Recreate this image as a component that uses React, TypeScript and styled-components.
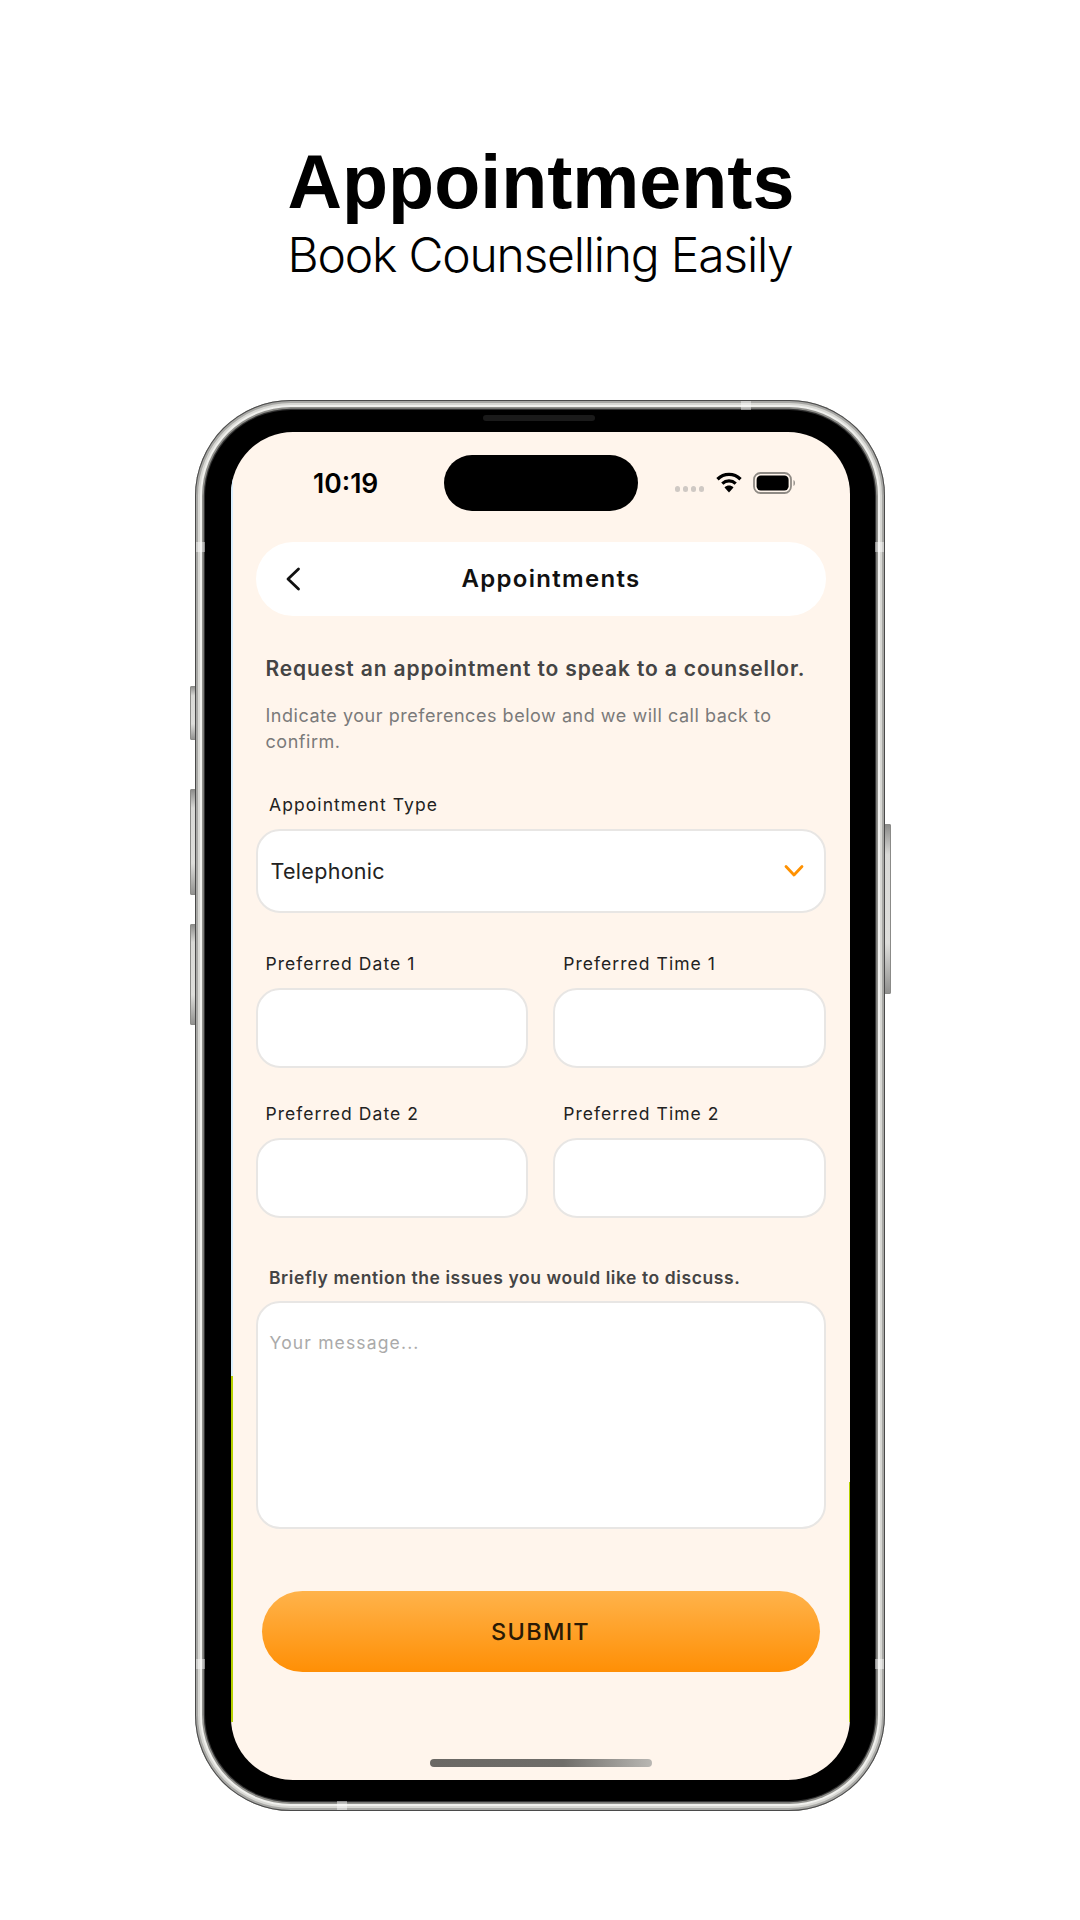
import React from "react";
import styled, { createGlobalStyle } from "styled-components";

const Global = createGlobalStyle`
  html, body { margin: 0; padding: 0; background: #fff; }
  #root { width: 1080px; min-height: 1920px; }
  * { box-sizing: border-box; }
`;

const Page = styled.main`
  width: 1080px;
  height: 1920px;
  background: #fff;
  display: flex;
  flex-direction: column;
  align-items: center;
  padding-top: 140px;
  overflow: hidden;
`;

const Headline = styled.h1`
  margin: 0;
  padding-left: 2px;
  font: 700 75.4px/84px "Liberation Sans", Arial, sans-serif;
  color: #000;
`;

const Subline = styled.p`
  margin: 2px 0 0;
  font: 300 48px/58px Inter, "Liberation Sans", sans-serif;
  color: #000;
  letter-spacing: -1.2px;
`;

const Phone = styled.div`
  position: relative;
  margin-top: 116px;
  width: 690px;
  height: 1411px;
`;

const SideButton = styled.div<{ $side: "left" | "right"; $top: number; $height: number }>`
  position: absolute;
  ${(p) => (p.$side === "left" ? "left: -5px;" : "right: -6px;")}
  top: ${(p) => p.$top}px;
  width: 7px;
  height: ${(p) => p.$height}px;
  border-radius: 2px;
  background: linear-gradient(180deg, #8a8a88 0%, #d9d9d6 18%, #dededb 70%, #8f8f8d 100%);
  box-shadow: inset 0 0 0 1px #8b8b88;
`;

const Frame = styled.div`
  position: relative;
  width: 100%;
  height: 100%;
  padding: 10px;
  border-radius: 96px;
  background: #f0f0ed;
  box-shadow:
    inset 0 0 0 1px #4a4a4a,
    inset 0 0 0 3px #a8a8a5,
    inset 0 0 0 5px #d8d8d4;
`;

const AntennaBand = styled.span<{ $left?: number; $right?: number; $top?: number; $bottom?: number; $horizontal?: boolean }>`
  position: absolute;
  background: rgba(255, 255, 255, 0.45);
  ${(p) => (p.$left !== undefined ? `left: ${p.$left}px;` : "")}
  ${(p) => (p.$right !== undefined ? `right: ${p.$right}px;` : "")}
  ${(p) => (p.$top !== undefined ? `top: ${p.$top}px;` : "")}
  ${(p) => (p.$bottom !== undefined ? `bottom: ${p.$bottom}px;` : "")}
  width: ${(p) => (p.$horizontal ? "10px" : "9px")};
  height: ${(p) => (p.$horizontal ? "9px" : "10px")};
`;

const Bezel = styled.div`
  width: 100%;
  height: 100%;
  padding: 22px 25px 21px 26px;
  border-radius: 86px;
  background: #000;
  box-shadow: 0 0 0 1.2px #333, 0 0 0 3px #8f8f8b;
`;

const Speaker = styled.div`
  position: absolute;
  top: 15px;
  left: 288px;
  width: 112px;
  height: 6px;
  border-radius: 3px;
  background: #1a1a1a;
`;

const Screen = styled.div`
  position: relative;
  width: 100%;
  height: 100%;
  border-radius: 62px;
  background: #fff5ec;
  display: flex;
  flex-direction: column;
  overflow: hidden;
  font-family: Inter, "Liberation Sans", sans-serif;
`;

const StatusBar = styled.div`
  height: 110px;
  padding-top: 23px;
  display: grid;
  grid-template-columns: 1fr 194px 1fr;
  align-items: start;
`;

const Clock = styled.span`
  padding-left: 82px;
  margin-top: 12px;
  font: 600 26.5px/32px Inter, sans-serif;
  color: #000;
`;

const Island = styled.div`
  height: 56px;
  border-radius: 28px;
  background: #000;
`;

const StatusIcons = styled.div`
  display: flex;
  align-items: center;
  padding-left: 37px;
  margin-top: 17px;
`;

const Dots = styled.div`
  display: flex;
  gap: 2.6px;
  margin-top: 12px;
  margin-right: 11px;
`;

const Dot = styled.span`
  width: 5.5px;
  height: 5.5px;
  border-radius: 50%;
  background: #cfc9c4;
`;

const HeaderPill = styled.header`
  position: relative;
  height: 74px;
  margin: 0 24px 0 24.5px;
  border-radius: 37px;
  background: #fff;
  display: flex;
  align-items: center;
  padding-left: 29px;
`;

const HeaderTitle = styled.h2`
  margin: 0 0 0 161px;
  font: 600 24px/30px Inter, sans-serif;
  letter-spacing: 1.3px;
  color: #111;
`;

const Intro = styled.h3`
  margin: 38px 0 0 34.5px;
  font: 600 21px/30px Inter, sans-serif;
  letter-spacing: 0.85px;
  color: #444;
`;

const Note = styled.p`
  margin: 19px 40px 0 34.5px;
  font: 400 18px/26px Inter, sans-serif;
  letter-spacing: 0.53px;
  color: #7a7a7a;
`;

const Label = styled.label<{ $gap: number; $strong?: boolean }>`
  display: block;
  margin: ${(p) => p.$gap}px 0 ${(p) => (p.$strong ? 11 : 12)}px 38px;
  font: ${(p) => (p.$strong ? 600 : 400)} 17.5px/24px Inter, sans-serif;
  letter-spacing: ${(p) => (p.$strong ? 0.58 : 1.08)}px;
  color: ${(p) => (p.$strong ? "#444" : "#222")};
`;

const Select = styled.div`
  height: 84px;
  margin: 0 24px 0 24.5px;
  padding: 0 20px 0 13px;
  border: 2px solid #e8e6e4;
  border-radius: 24px;
  background: #fff;
  display: flex;
  align-items: center;
  justify-content: space-between;
`;

const SelectValue = styled.span`
  font: 400 21.5px/28px Inter, sans-serif;
  letter-spacing: 0.3px;
  color: #222;
`;

const FieldGrid = styled.div`
  display: grid;
  grid-template-columns: 1fr 1fr;
  column-gap: 25px;
  margin: 0 24px 0 24.5px;
`;

const FieldColumn = styled.div`
  display: flex;
  flex-direction: column;
`;

const FieldLabel = styled.label<{ $gap: number }>`
  margin: ${(p) => p.$gap}px 0 12px 10px;
  font: 400 17.5px/24px Inter, sans-serif;
  letter-spacing: 1.05px;
  color: #222;
`;

const InputBox = styled.div`
  height: 80px;
  border: 2px solid #e8e6e4;
  border-radius: 24px;
  background: #fff;
`;

const MessageBox = styled.div`
  height: 228px;
  margin: 0 24px 0 24.5px;
  padding: 28px 12px;
  border: 2px solid #e8e6e4;
  border-radius: 24px;
  background: #fff;
`;

const Placeholder = styled.span`
  font: 400 17.5px/24px Inter, sans-serif;
  letter-spacing: 1.15px;
  color: #aaa;
`;

const SubmitButton = styled.button`
  height: 81px;
  margin: 62px 30.5px 0;
  border: 0;
  border-radius: 41px;
  background: linear-gradient(180deg, #ffb34b 0%, #ff8f05 100%);
  font: 500 23.5px/30px Inter, sans-serif;
  letter-spacing: 1.3px;
  color: #2a1a05;
`;

const HomeBar = styled.div`
  align-self: center;
  width: 222px;
  height: 8px;
  margin-top: 87px;
  border-radius: 4px;
  background: linear-gradient(90deg, #6a6864 0%, #6f6d69 60%, #b9b7b3 100%);
`;

const EdgeTint = styled.span<{ $side: "left" | "right"; $top: number; $height: number; $color: string }>`
  position: absolute;
  ${(p) => p.$side}: 0;
  top: ${(p) => p.$top}px;
  width: 1.5px;
  height: ${(p) => p.$height}px;
  background: ${(p) => p.$color};
`;

const WifiIcon = () => (
  <svg width="28" height="22" viewBox="0 0 27 22" style={{ marginRight: 10, marginTop: -3 }}>
    <path d="M2 8.2C8.5 1.8 18.5 1.8 25 8.2" fill="none" stroke="#000" strokeWidth="3.4" />
    <path d="M6.8 12.6C10.6 9 16.4 9 20.2 12.6" fill="none" stroke="#000" strokeWidth="3.2" />
    <path d="M13.5 21.5L9 16.4C11.6 14 15.4 14 18 16.4Z" fill="#000" />
  </svg>
);

const BatteryIcon = () => (
  <svg width="44" height="22" viewBox="0 0 44 22">
    <rect x="1" y="1" width="37" height="20" rx="6.5" fill="none" stroke="#8f8a84" strokeWidth="1.8" />
    <rect x="3.6" y="3.6" width="32" height="14.8" rx="4.2" fill="#000" />
    <path d="M40.5 8C42.4 8.6 42.4 13.4 40.5 14Z" fill="#8f8a84" />
  </svg>
);

const BackIcon = () => (
  <svg width="16" height="24" viewBox="0 0 16 24">
    <path d="M13.5 2L3 12L13.5 22" fill="none" stroke="#111" strokeWidth="2.8" strokeLinecap="round" strokeLinejoin="round" />
  </svg>
);

const ChevronIcon = () => (
  <svg width="20" height="14" viewBox="0 0 20 14">
    <path d="M2 2.5L10 11L18 2.5" fill="none" stroke="#ff9100" strokeWidth="2.8" strokeLinecap="round" strokeLinejoin="round" />
  </svg>
);

export default function App() {
  return (
    <Page>
      <Global />
      <Headline>Appointments</Headline>
      <Subline>Book Counselling Easily</Subline>
      <Phone>
        <SideButton $side="left" $top={286} $height={54} />
        <SideButton $side="left" $top={389} $height={106} />
        <SideButton $side="left" $top={524} $height={101} />
        <SideButton $side="right" $top={424} $height={170} />
        <Frame>
          <AntennaBand $left={546} $top={1} $horizontal />
          <AntennaBand $left={1} $top={142} />
          <AntennaBand $right={1} $top={142} />
          <AntennaBand $left={1} $bottom={142} />
          <AntennaBand $right={1} $bottom={142} />
          <AntennaBand $left={142} $bottom={1} $horizontal />
          <Bezel>
            <Speaker />
            <Screen>
              <EdgeTint $side="left" $top={0} $height={944} $color="#d9efff" />
              <EdgeTint $side="left" $top={944} $height={346} $color="#b5d000" />
              <EdgeTint $side="right" $top={1050} $height={240} $color="#b5d000" />
              <StatusBar>
                <Clock>10:19</Clock>
                <Island />
                <StatusIcons>
                  <Dots>
                    <Dot />
                    <Dot />
                    <Dot />
                    <Dot />
                  </Dots>
                  <WifiIcon />
                  <BatteryIcon />
                </StatusIcons>
              </StatusBar>
              <HeaderPill>
                <BackIcon />
                <HeaderTitle>Appointments</HeaderTitle>
              </HeaderPill>
              <Intro>Request an appointment to speak to a counsellor.</Intro>
              <Note>Indicate your preferences below and we will call back to confirm.</Note>
              <Label $gap={38}>Appointment Type</Label>
              <Select>
                <SelectValue>Telephonic</SelectValue>
                <ChevronIcon />
              </Select>
              <FieldGrid>
                <FieldColumn>
                  <FieldLabel $gap={39}>Preferred Date 1</FieldLabel>
                  <InputBox />
                </FieldColumn>
                <FieldColumn>
                  <FieldLabel $gap={39}>Preferred Time 1</FieldLabel>
                  <InputBox />
                </FieldColumn>
                <FieldColumn>
                  <FieldLabel $gap={34}>Preferred Date 2</FieldLabel>
                  <InputBox />
                </FieldColumn>
                <FieldColumn>
                  <FieldLabel $gap={34}>Preferred Time 2</FieldLabel>
                  <InputBox />
                </FieldColumn>
              </FieldGrid>
              <Label $gap={48} $strong>Briefly mention the issues you would like to discuss.</Label>
              <MessageBox>
                <Placeholder>Your message...</Placeholder>
              </MessageBox>
              <SubmitButton>SUBMIT</SubmitButton>
              <HomeBar />
            </Screen>
          </Bezel>
        </Frame>
      </Phone>
    </Page>
  );
}
